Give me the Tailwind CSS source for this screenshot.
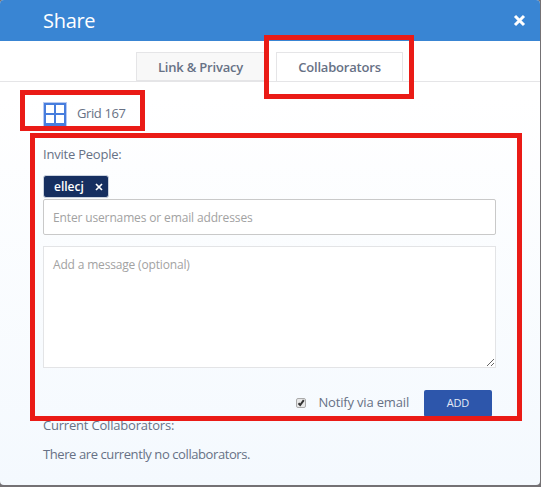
<!DOCTYPE html>
<html lang="en">
<head>
<meta charset="utf-8">
<title>Share</title>
<script src="https://cdn.jsdelivr.net/npm/@tailwindcss/browser@4"></script>
</head>
<body class="relative w-[541px] h-[487px] overflow-hidden bg-[#747174] font-['Open_Sans',sans-serif] text-[13px] leading-[18px] text-[#677185]">
<main class="w-[540px] h-[485px] rounded-[4px] overflow-hidden bg-linear-to-b from-white from-20% to-[#f4f9fe] flex flex-col">
  <header class="h-[41px] shrink-0 bg-[#3985d3] flex items-center justify-between pl-[43px] pr-[14px]">
    <h1 class="text-[20px] leading-[28px] tracking-[-0.3px] text-white">Share</h1>
    <svg class="w-[13px] h-[13px]" viewBox="0 0 13 13"><path d="M2 2L11 11M11 2L2 11" stroke="white" stroke-width="3"/></svg>
  </header>
  <nav class="h-[41px] shrink-0 bg-white border-b border-[#e5e5e7] pt-[11px] pl-[136px] flex gap-[11px] font-semibold tracking-[-0.2px]">
    <div class="w-[129px] h-[29px] border border-[#e5e5e7] bg-[#f8f8f8] flex items-center justify-center">Link &amp; Privacy</div>
    <div class="w-[127px] h-[29px] border border-b-0 border-[#e5e5e7] bg-white flex items-center justify-center">Collaborators</div>
  </nav>
  <section class="pl-[43px] pt-[20px] flex flex-col tracking-[-0.22px]">
    <div class="flex h-[24px] items-center gap-[10px]">
      <svg class="w-[24px] h-[24px]" viewBox="0 0 24 24"><path fill="#b7c9f1" d="M0 0h24v24H0z"/><path fill="#477ddd" d="M1 1h22v23H1z"/><path fill="white" d="M3 3h8v8H3zM13 3h8v8h-8zM3 13h8v8H3zM13 13h8v8h-8z"/></svg>
      <span class="-mt-[2px] tracking-[-0.4px]">Grid 167</span>
    </div>
    <p class="mt-[19px]">Invite People:</p>
    <div class="mt-[12px] w-[66px] h-[23px] rounded-[3px] border border-[#cbd3df] bg-[#162f60] text-white flex items-center pl-[10px] gap-[11px] font-semibold text-[12px] tracking-[0px]"><span>ellecj</span><svg class="w-[8px] h-[8px]" viewBox="0 0 8 8"><path d="M1 1L7 7M7 1L1 7" stroke="white" stroke-width="1.7"/></svg></div>
    <div class="mt-[1px] w-[453px] h-[36px] rounded-[2px] border border-[#c9c9c9] bg-white text-[#a2a2a2] text-[12px] tracking-[-0.14px] flex items-center pl-[9px] pt-px">Enter usernames or email addresses</div>
    <div class="mt-[11px] w-[453px] h-[122px] border border-[#e3e4e6] bg-white text-[#a2a2a2] text-[12px] tracking-[-0.17px] flex flex-col justify-between pl-[9px] pt-[9px]"><span>Add a message (optional)</span>
      <svg class="self-end w-[9px] h-[9px]" viewBox="0 0 9 9"><path d="M1 8L8 1M5 8L8 5" stroke="#666" stroke-width="1"/></svg></div>
    <div class="mt-[22px] h-[27px] w-[449px] flex items-center justify-end">
      <svg class="w-[10px] h-[10px] mr-[12px] -mt-[2px]" viewBox="0 0 10 10"><rect x=".5" y=".5" width="9" height="9" rx="1.5" fill="#e8e8e8" stroke="#aaa"/><path d="M2.5 5.2L4.2 7L7.8 2.2" fill="none" stroke="#333" stroke-width="2"/></svg>
      <span class="mr-[15px] -mt-[4px] tracking-[-0.17px]">Notify via email</span>
      <div class="w-[68px] h-[27px] rounded-[2px] bg-[#2d56ab] text-[#e5ebf7] text-[11px] flex items-center justify-center pb-px">ADD</div>
    </div>
    <p class="-mt-[1px] tracking-[-0.2px]">Current Collaborators:</p>
    <p class="mt-[11px] tracking-[-0.41px]">There are currently no collaborators.</p>
  </section>
</main>
<!-- Annotation frames -->
<div class="absolute left-[264px] top-[35px] w-[150px] h-[64px] border-5 border-[#ea1b16]"></div>
<div class="absolute left-[20px] top-[90px] w-[125px] h-[41px] border-5 border-[#ea1b16]"></div>
<div class="absolute left-[30px] top-[133px] w-[492px] h-[288px] border-5 border-[#ea1b16]"></div>
</body>
</html>
